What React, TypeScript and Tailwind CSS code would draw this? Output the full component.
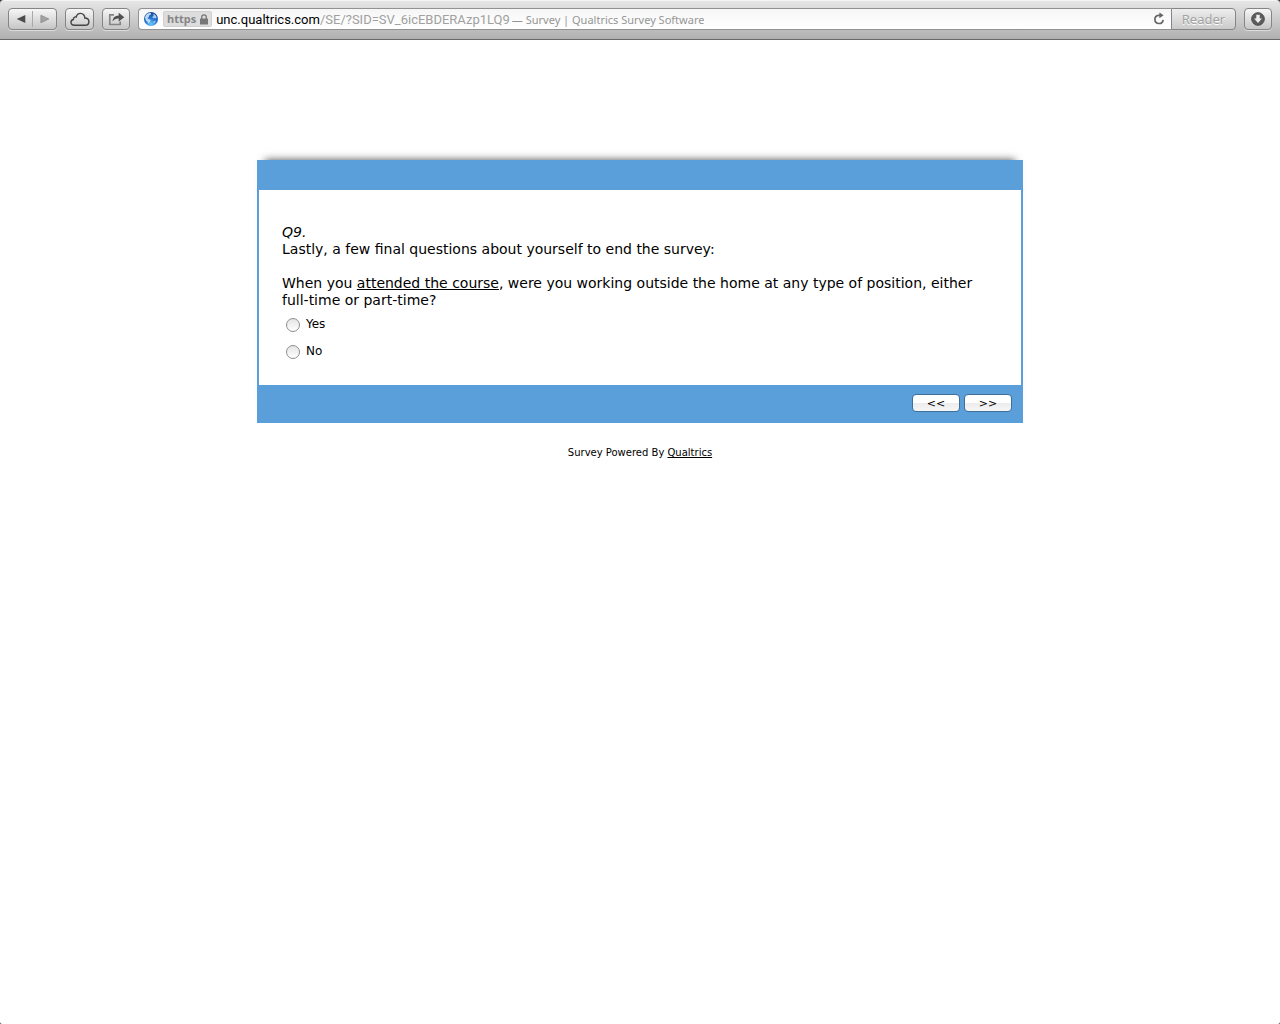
import { useState } from "react";

const answers = [
  { value: "yes", label: "Yes" },
  { value: "no", label: "No" },
];

const toolButton =
  "flex h-[22px] items-center justify-center rounded border border-[#858585] bg-linear-to-b from-[#f6f6f6] to-[#c6c6c6] shadow-[0_1px_0_#dddddd]";

const GlobeIcon = () => (
  <svg width="16" height="16" viewBox="0 0 16 16" className="shrink-0" aria-hidden="true">
    <defs>
      <radialGradient id="globe" cx="0.5" cy="0.85" r="0.75">
        <stop offset="0" stopColor="#6cc8fb" />
        <stop offset="0.5" stopColor="#2c7bd6" />
        <stop offset="1" stopColor="#1b4a9c" />
      </radialGradient>
    </defs>
    <circle cx="8" cy="8" r="7" fill="url(#globe)" />
    <path
      d="M2 6.200C2.600 3.900 4.300 2.300 6.600 1.700l1.600.6-.6 1.500-1.500.8-.3 1.600-1.500.7 1 1.100 1.900.5.400 1.300-1.200 1.700-.6 1.200-1.400-2-1.700-1.700z"
      fill="#b9dcf6"
    />
    <path d="m10.200 2.700 2 1 1.400 2.200-.6 1.700-1.500-.6-1.500.3-.6-1.500 1.200-1zM10.800 10.200l1.900-.5-.7 1.900-1.500 1z" fill="#9fcdf3" />
  </svg>
);

const BrowserBar = () => (
  <header className="bg-[#3d3d4a]">
    <div className="flex h-10 items-start rounded-t border-t border-b border-t-[#f5f5f5] border-b-[#686868] bg-linear-to-b from-[#e6e6e6] to-[#b0b0b0] px-2 pt-[7px] font-['Noto_Sans',sans-serif]">
      <div className={`${toolButton} w-[49px] shrink-0`}>
        <button type="button" aria-label="Back" className="flex h-full flex-1 items-center justify-center">
          <svg width="10" height="10" viewBox="0 0 10 10">
            <path d="M9.3 1v8L.7 5z" fill="#4c4c4c" />
          </svg>
        </button>
        <span className="h-4 w-px bg-[#aaaaaa]"></span>
        <button type="button" aria-label="Forward" className="flex h-full flex-1 items-center justify-center">
          <svg width="10" height="10" viewBox="0 0 10 10">
            <path d="M.9 1.2v7.6L8.8 5z" fill="#a2a2a2" stroke="#858585" strokeWidth="0.7" />
          </svg>
        </button>
      </div>

      <button type="button" aria-label="iCloud tabs" className={`${toolButton} ml-2 w-[29px] shrink-0`}>
        <svg width="20" height="15" viewBox="0 0 20 15" fill="none">
          <path
            d="M4.600 13.200C2.400 13.200 1 12 1 10.300c0-1.500 1-2.600 2.400-2.800-.2-1.700 1.200-3 2.800-2.500C6.800 2.800 8.200 1.400 10.400 1.400c2.700 0 4.500 2 4.400 4.600 2.400.1 4.100 1.600 4.100 3.700 0 2.200-1.600 3.500-3.800 3.500z"
            stroke="#444444"
            strokeWidth="1.4"
          />
        </svg>
      </button>

      <button type="button" aria-label="Share" className={`${toolButton} ml-2 w-7 shrink-0`}>
        <svg width="17" height="14" viewBox="0 0 17 14" fill="none">
          <path d="M6 2.800H1.800v9.700h10.400V9.500" stroke="#858585" strokeWidth="1.700" />
          <path d="M4.600 9.600c.2-3.900 2.400-5.900 6.100-6V.8l5.600 4.400-5.600 4.300V6.600C8 6.500 6 7.400 4.600 9.600z" fill="#505050" />
        </svg>
      </button>

      <div className="ml-2 flex h-[22px] min-w-0 flex-1 items-center rounded-l border border-r-0 border-[#929292] bg-linear-to-b from-[#f6f6f6] to-white pl-1">
        <GlobeIcon />
        <span className="ml-1 flex h-4 shrink-0 items-center gap-1 rounded-xs border border-[#d0d0d0] bg-[#dddddd] px-[3px] text-[11px] leading-[14px] font-bold text-[#868686]">
          https
          <svg width="8" height="11" viewBox="0 0 8 11" aria-hidden="true">
            <path d="M1.700 5V3.200a2.300 2.300 0 0 1 4.600 0V5" fill="none" stroke="#777777" strokeWidth="1.300" />
            <rect y="4.500" width="8" height="6" rx="0.600" fill="#777777" />
          </svg>
        </span>
        <div className="ml-1 flex shrink-0 pt-px font-['Roboto',sans-serif] text-[13px] leading-4">
          <input
            type="text"
            aria-label="Address"
            defaultValue="unc.qualtrics.com"
            className="field-sizing-content text-black outline-none"
          />
          <span className="whitespace-nowrap text-[#a0a0a0]">/SE/?SID=SV_6icEBDERAzp1LQ9</span>
        </div>
        <span className="ml-0.5 truncate pt-px text-[11px] leading-4 text-[#969696]">
          — Survey | Qualtrics Survey Software
        </span>
        <button type="button" aria-label="Reload" className="mr-1 ml-auto shrink-0 p-px">
          <svg width="14" height="14" viewBox="0 0 14 14" fill="none">
            <path d="M8.500 3.300H6.600a4.100 4.100 0 1 0 4.500 4.500" stroke="#666666" strokeWidth="1.700" />
            <path d="M7.400.4v5.800l4.200-2.900z" fill="#666666" />
          </svg>
        </button>
      </div>
      <button
        type="button"
        className="flex h-[22px] w-[65px] shrink-0 items-center justify-center rounded-r border border-[#858585] bg-linear-to-b from-[#eeeeee] to-[#cacaca] text-[13px] leading-4 text-[#a2a2a2] text-shadow-[0_1px_0_#ffffff]">
        Reader
      </button>

      <button type="button" aria-label="Downloads" className={`${toolButton} ml-2 w-7 shrink-0`}>
        <svg width="14" height="14" viewBox="0 0 14 14">
          <circle cx="7" cy="7" r="6.300" fill="#5c5c5c" stroke="#4a4a4a" />
          <path d="M5.300 2.800h3.400v3.800h2.200L7 11 3.100 6.600h2.200z" fill="#eeeeee" />
        </svg>
      </button>
    </div>
  </header>
);

const navButton =
  "h-[18px] w-12 rounded border border-[#3f6f9b] bg-linear-to-b from-white from-50% via-[#ececec] via-50% to-[#f6f6f6] pt-0.5 text-[11px] leading-[14px] text-black";

const Survey = () => {
  const [answer, setAnswer] = useState("");

  return (
    <form
      onSubmit={(e) => e.preventDefault()}
      className="w-full max-w-[766px] border-2 border-[#5b9fda] bg-white shadow-[0_-8px_8px_-8px_rgba(0,0,0,0.700)]">
      <div className="h-7 bg-[#5b9fda]"></div>
      <fieldset aria-labelledby="q9-text" className="px-[23px] pt-[34px] pb-5">
        <div id="q9-text" className="text-sm leading-[17px]">
          <p className="italic">Q9.</p>
          <p>Lastly, a few final questions about yourself to end the survey:</p>
          <p className="mt-[17px]">
            When you <u>attended the course</u>, were you working outside the home at any type of position, either
            full-time or part-time?
          </p>
        </div>
        <div className="mt-0.5">
          {answers.map((item) => (
            <label key={item.value} className="flex h-[27px] items-center gap-1.5 pl-1 text-xs">
              <input
                type="radio"
                name="q9"
                value={item.value}
                checked={answer === item.value}
                onChange={() => setAnswer(item.value)}
                className="size-3.5 appearance-none rounded-full border border-[#8e8e8e] bg-linear-to-b from-[#e4e4e4] to-white checked:border-4 checked:border-[#5b9fda]"
              />
              <span className="pb-0.5">{item.label}</span>
            </label>
          ))}
        </div>
      </fieldset>
      <div className="flex h-9 items-center justify-end gap-1 bg-[#5b9fda] pr-[9px]">
        <button type="button" className={navButton}>
          &lt;&lt;
        </button>
        <button type="submit" className={navButton}>
          &gt;&gt;
        </button>
      </div>
    </form>
  );
};

export default function App() {
  return (
    <div className="bg-[#333333]">
      <div className="min-h-screen rounded-b-xs bg-white font-['DejaVu_Sans',Verdana,sans-serif] text-black">
        <BrowserBar />
        <main className="flex flex-col items-center pt-30">
          <Survey />
          <p className="mt-[22px] text-[10px] leading-4">
            Survey Powered By{" "}
            <a href="#qualtrics" className="underline">
              Qualtrics
            </a>
          </p>
        </main>
      </div>
    </div>
  );
}
